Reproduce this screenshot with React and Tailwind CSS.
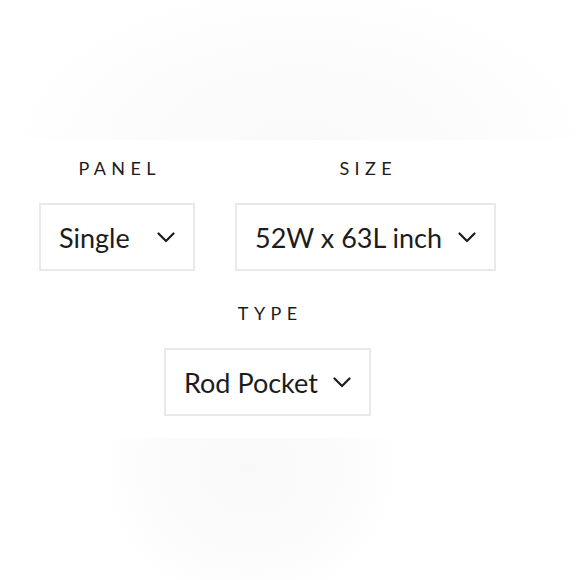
const Chevron = () => (
  <svg width="18" height="11" viewBox="0 0 18 11" fill="none" className="shrink-0">
    <path d="M1.5 1.5 L9 9 L16.5 1.5" stroke="#1c1c1c" strokeWidth="2.2" strokeLinecap="round" strokeLinejoin="round" />
  </svg>
);

function Picker({ label, value, width }) {
  return (
    <div className="flex flex-col items-center">
      <div className="text-[18px] leading-none tracking-[0.3em] pl-[0.3em] text-[#1c1c1c] h-[16px] flex items-center">{label}</div>
      <div className={`mt-[27px] h-[68px] border-2 border-[#e9e9e8] bg-white flex items-center justify-between pl-[18px] pr-[18px] ${width}`}>
        <span className="text-[27px] text-[#1c1c1c] leading-none">{value}</span>
        <Chevron />
      </div>
    </div>
  );
}

export default function App() {
  return (
    <div
      className="relative w-[580px] h-[580px] bg-white overflow-hidden"
      style={{ fontFamily: "Lato, 'Open Sans', sans-serif" }}
    >
      <div className="absolute left-0 top-0 w-full h-[140px] bg-[radial-gradient(ellipse_300px_170px_at_300px_150px,#f9f9f9,#fdfdfd_70%,#ffffff)]" />
      <div className="absolute left-[100px] top-[438px] w-[310px] h-[142px] bg-[radial-gradient(ellipse_150px_140px_at_150px_30px,#f8f8f8,#fdfdfd_80%,#ffffff)]" />
      <div className="relative pt-[160px] w-[535px] flex flex-wrap justify-center gap-x-[40px] gap-y-[34px]">
        <Picker label="PANEL" value="Single" width="w-[156px]" />
        <Picker label="SIZE" value="52W x 63L inch" width="w-[261px]" />
        <Picker label="TYPE" value="Rod Pocket" width="w-[207px]" />
      </div>
    </div>
  );
}
